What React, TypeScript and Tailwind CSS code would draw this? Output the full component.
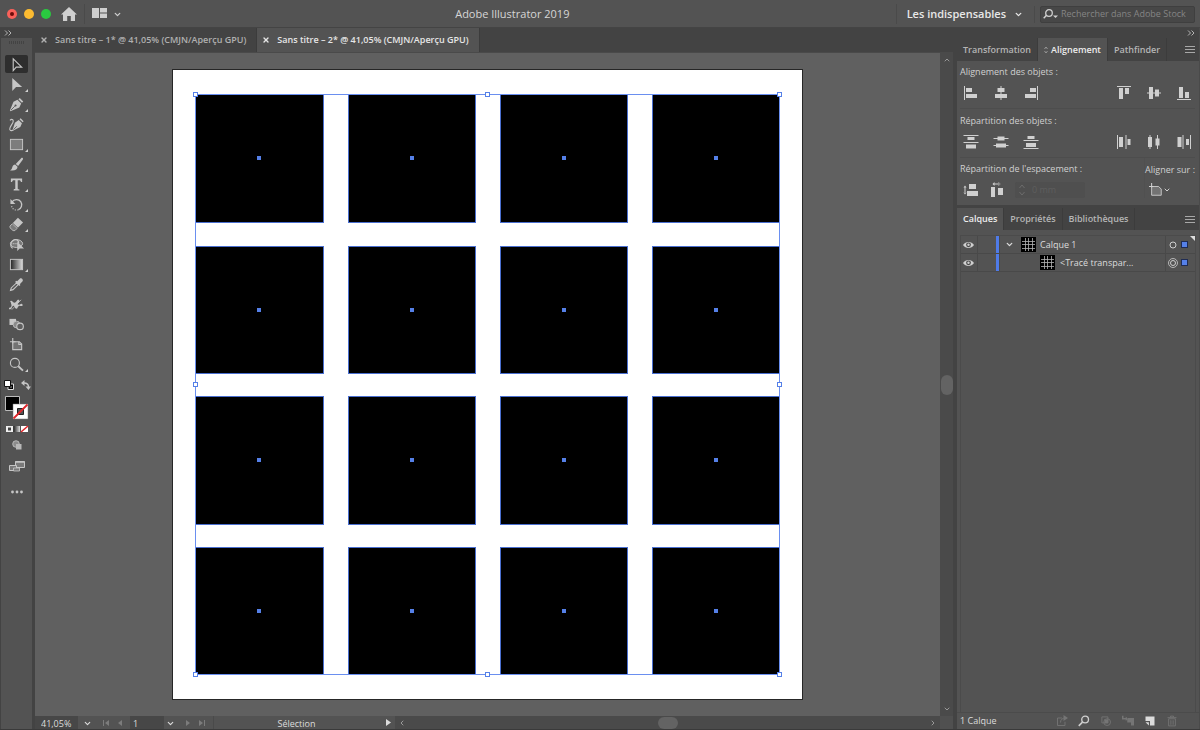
import { useState } from 'react';
import type { ReactNode } from 'react';
import { ChevronDown, ChevronUp, ChevronLeft, ChevronRight, X } from 'lucide-react';
import { clsx } from 'clsx';

type Tool = {
  id: string;
  label: string;
  more?: boolean;
  icon: ReactNode;
};

type IconProps = {
  children: ReactNode;
  className?: string;
};

function Icon({ children, className = 'size-4' }: IconProps) {
  return (
    <svg viewBox="0 0 16 16" fill="currentColor" aria-hidden="true" className={clsx('shrink-0', className)}>
      {children}
    </svg>
  );
}

const stroke = { fill: 'none', stroke: 'currentColor', strokeWidth: 1.2 };

/* =========================
   OUTILS
========================= */

const tools: Tool[] = [
  {
    id: 'selection',
    label: 'Sélection',
    icon: <path d="M4.5 2v12.500l3.200-3.700h5.800z" {...stroke} />,
  },
  {
    id: 'direct',
    label: 'Sélection directe',
    more: true,
    icon: <path d="M3.500 1v14l4-4.300h6.500z" />,
  },
  {
    id: 'pen',
    label: 'Plume',
    more: true,
    icon: (
      <>
        <path d="M9 3l4 4-2 4.200-9.500 3.900-.6-.6L4.800 5z" />
        <path d="M10 2.300l1.500-1.300 3.700 3.700-1.400 1.500z" />
        <path d="M2 14l4.200-4.200" stroke="#535353" strokeWidth="0.9" />
        <circle cx="7" cy="9" r="1.1" fill="#535353" />
      </>
    ),
  },
  {
    id: 'curve',
    label: 'Courbure',
    icon: (
      <>
        <path d="M10.3 3.200l3.500 3.500-1.700 4-7.600 3.800-.6-.6L6.300 6z" />
        <path d="M11.2 2.400l1.200-1.100 3.200 3.200-1.100 1.200z" />
        <path d="M4.8 13.4l3.6-3.6" stroke="#535353" strokeWidth="0.9" />
        <path d="M1 3.500c2.300-2.300 4.300-.2 3 2.700C2.600 9 0 11.500 1 13.500c.8 1.500 2.500 1 3.500.300" {...stroke} />
      </>
    ),
  },
  {
    id: 'rect',
    label: 'Rectangle',
    more: true,
    icon: <rect x="1.500" y="2.500" width="13" height="11" fill="#7d7d7d" stroke="currentColor" />,
  },
  {
    id: 'brush',
    label: 'Pinceau',
    more: true,
    icon: (
      <>
        <path d="M14.600 1c.6.500.500 1.200 0 1.900L9.700 9.600 7.200 7.400 13 1.200c.500-.5 1.100-.6 1.600-.2z" />
        <path d="M6.500 8l2.600 2.300c.1 2.900-3.100 4.900-8.100 3.900 2-.8 2.100-1.900 2.600-3.500.400-1.400 1.500-2.500 2.900-2.700z" />
      </>
    ),
  },
  {
    id: 'type',
    label: 'Texte',
    more: true,
    icon: <path d="M2 1.500h12v3.900h-1.300c-.2-1.500-.6-2-2-2H9.300v8.500c0 1 .3 1.200 1.800 1.300v1.100H4.900v-1.100c1.500-.1 1.800-.3 1.800-1.300V3.400H5.300c-1.400 0-1.800.5-2 2H2z" />,
  },
  {
    id: 'rotate',
    label: 'Rotation',
    more: true,
    icon: (
      <>
        <path d="M3 5.500C5.500 2 10.500 2 12.500 5c2.300 3.300.500 7.500-2.500 8.500" {...stroke} strokeWidth="1.400" />
        <path d="M10 13.500c-3.500 1.500-7.500-1-7.200-5" {...stroke} strokeDasharray="1.200 1.500" />
        <path d="M1.500 2v5.500h5.300z" />
      </>
    ),
  },
  {
    id: 'eraser',
    label: 'Gomme',
    more: true,
    icon: (
      <>
        <path d="M9.500.8l5.500 5-5.500 5.600-5.400-5z" />
        <path d="M3.500 7.200l5.200 4.900-2.400 2.400H4.300L1 11.400V9.700z" fill="#7a7a7a" stroke="currentColor" strokeWidth="0.900" />
      </>
    ),
  },
  {
    id: 'builder',
    label: 'Concepteur de forme',
    icon: (
      <>
        <ellipse cx="8" cy="7" rx="6.500" ry="4.200" fill="#777" stroke="currentColor" />
        <path d="M4 12c-3-1.500-3-6.500 1.500-9 3-1.200 5 1 4.800 4" {...stroke} />
        <path d="M4 7h5" {...stroke} strokeDasharray="1 1" />
        <path d="M8.800 5v10l2.600-2.800h4.600z" />
      </>
    ),
  },
  {
    id: 'gradient',
    label: 'Dégradé',
    more: true,
    icon: (
      <>
        <defs>
          <linearGradient id="tool-gradient">
            <stop offset="0" stopColor="#222" />
            <stop offset="1" stopColor="#ddd" />
          </linearGradient>
        </defs>
        <rect x="1.500" y="2.500" width="13" height="11" fill="url(#tool-gradient)" stroke="currentColor" />
      </>
    ),
  },
  {
    id: 'eyedropper',
    label: 'Pipette',
    icon: (
      <>
        <path d="M8.700 4.500l3-3c1.300-1.100 4 1.100 2.800 2.900l-3 3.200.7.800-1.200 1.200-4.500-4.400 1.200-1.200z" />
        <path d="M8 6.300l1.900 1.800-5.600 5.400-2.700.9.800-2.700z" {...stroke} />
      </>
    ),
  },
  {
    id: 'puppet',
    label: 'Marionnette',
    icon: (
      <>
        <path d="M1 4.500c2-2 3 1.500 5 1.500s2-3 4-3 1 3-.5 4 1.500 2 3 .5 3 1.500 1.500 2-2-.5-3.500 0-1 3.500-3 3-1-3.500-3-3-1 3-3 3.500-3-1-1-1.500 2.500-2 2-3.500S2 5 1 4.500z" />
        <path d="M3 13.500L8 8l5-5" {...stroke} strokeWidth="0.8" />
      </>
    ),
  },
  {
    id: 'blend',
    label: 'Dégradé de formes',
    icon: (
      <>
        <rect x="0.500" y="2" width="7" height="6.500" />
        <circle cx="8" cy="8" r="3.600" fill="#8a8a8a" stroke="currentColor" strokeWidth="0.8" />
        <circle cx="11.800" cy="10" r="3.500" fill="#5f5f5f" stroke="currentColor" strokeWidth="1.200" />
      </>
    ),
  },
  {
    id: 'artboard',
    label: 'Plan de travail',
    icon: (
      <>
        <path d="M4 5h7l2.500 2.500v6H4z" fill="#737373" stroke="currentColor" strokeWidth="1.200" />
        <path d="M4 1v6M1 5h6" {...stroke} />
        <path d="M10.500 5v3h3" {...stroke} />
      </>
    ),
  },
  {
    id: 'zoom',
    label: 'Zoom',
    more: true,
    icon: (
      <>
        <circle cx="6.300" cy="6.300" r="4.800" {...stroke} />
        <path d="M9.900 9.900l5 4.700" {...stroke} strokeWidth="2" />
      </>
    ),
  },
];

/* =========================
   ALIGNEMENT
========================= */

type Action = { label: string; icon: ReactNode };

const alignH: Action[] = [
  { label: 'Alignement horizontal à gauche', icon: <path d="M1 1h1v14H1zM3 3h6v4H3zM3 9h11v4H3z" /> },
  { label: 'Alignement horizontal au centre', icon: <path d="M7.500 1h1v14h-1zM4.500 3h7v4h-7zM2 9h12v4H2z" /> },
  { label: 'Alignement horizontal à droite', icon: <path d="M14 1h1v14h-1zM7 3h6v4H7zM2 9h11v4H2z" /> },
];

const alignV: Action[] = [
  { label: 'Alignement vertical en haut', icon: <path d="M1 1h14v1H1zM3 3h4v11H3zM9 3h4v6H9z" /> },
  { label: 'Alignement vertical au centre', icon: <path d="M1 7.500h14v1H1zM3 2h4v12H3zM9 4.500h4v7H9z" /> },
  { label: 'Alignement vertical en bas', icon: <path d="M1 14h14v1H1zM3 2h4v11H3zM9 7h4v6H9z" /> },
];

const spreadV: Action[] = [
  { label: 'Distribution verticale en haut', icon: <path d="M.5 1h15v1H.5zM4.500 3h7v3h-7zM.5 8h15v1H.5zM3 10.500h10v4H3z" /> },
  { label: 'Distribution verticale au centre', icon: <path d="M.5 4h15v1H.5zM4.500 2.500h7v4h-7zM.5 11h15v1H.5zM3 9.500h10v4H3z" /> },
  { label: 'Distribution verticale en bas', icon: <path d="M.5 6h15v1H.5zM4.500 2h7v3h-7zM.5 14h15v1H.5zM3 9h10v4H3z" /> },
];

const spreadH: Action[] = [
  { label: 'Distribution horizontale à gauche', icon: <path d="M1 1h1v14H1zM3 3h4v10H3zM9.500 1h1v14h-1zM11.500 5h3v6h-3z" /> },
  { label: 'Distribution horizontale au centre', icon: <path d="M3.500 1h1v14h-1zM2 3h4v10H2zM11 1h1v14h-1zM9.500 4.500h4v7h-4z" /> },
  { label: 'Distribution horizontale à droite', icon: <path d="M6.500 1h1v14h-1zM1.500 3h4v10h-4zM14 1h1v14h-1zM10 5h3v6h-3z" /> },
];

function Actions({ items }: { items: Action[] }) {
  return (
    <div className="flex gap-[14px]">
      {items.map((a) => (
        <button key={a.label} aria-label={a.label}>
          <Icon>{a.icon}</Icon>
        </button>
      ))}
    </div>
  );
}

function MenuButton() {
  return (
    <button aria-label="Menu du panneau" className="ml-auto pr-1 text-[#a8a8a8]">
      <svg viewBox="0 0 10 7" className="h-[7px] w-[10px]" fill="currentColor">
        <path d="M0 0h10v1H0zM0 3h10v1H0zM0 6h10v1H0z" />
      </svg>
    </button>
  );
}

function DoubleChevron() {
  return (
    <svg viewBox="0 0 8 6" className="h-[6px] w-2" fill="none" stroke="#b5b5b5">
      <path d="M1 .5L3.500 3 1 5.500M4.500.5L7 3 4.500 5.500" />
    </svg>
  );
}

/* =========================
   EN-TÊTE
========================= */

function Header() {
  return (
    <header className="flex h-7 items-center border-b border-[#444] bg-[#535353] pt-px">
      <div className="flex w-[129px] items-center">
        <div className="flex gap-[7px] pl-[7px]">
          <button aria-label="Fermer" className="flex size-[10px] items-center justify-center rounded-full bg-[#f9615a]">
            <span className="size-1 rounded-full bg-[#6d0c0a]" />
          </button>
          <button aria-label="Réduire" className="size-[10px] rounded-full bg-[#fcbb31]" />
          <button aria-label="Agrandir" className="size-[10px] rounded-full bg-[#2ac940]" />
        </div>
        <button aria-label="Accueil" className="ml-[10px] text-[#cfcfcf]">
          <svg viewBox="0 0 16 14" className="h-[14px] w-4" fill="currentColor">
            <path d="M8 0l8 7.500h-2V14H9.800V9H6.200v5H2V7.500H0z" />
          </svg>
        </button>
        <button aria-label="Réorganiser les documents" className="ml-[7px] flex items-center gap-[6px] border-l border-[#4a4a4a] py-1 pl-[7px] text-[#cfcfcf]">
          <svg viewBox="0 0 15 10" className="mb-[2px] h-[10px] w-[15px]" fill="currentColor">
            <path d="M0 0h7v10H0zM8 0h7v4.500H8zM8 5.500h7V10H8z" />
          </svg>
          <ChevronDown size={9} strokeWidth={3.500} />
        </button>
      </div>

      <h1 className="flex-1 text-center text-[11px] text-[#d6d6d6]">Adobe Illustrator 2019</h1>

      <div className="flex items-center">
        <button className="flex items-center gap-2 border-l border-[#4a4a4a] py-[2px] pr-[11px] pl-[10px] text-[11px] leading-4 font-semibold text-[#e8e8e8]">
          Les indispensables
          <ChevronDown size={9} strokeWidth={3.500} />
        </button>
        <div className="mr-[5px] border-l border-[#4a4a4a] pl-[5px]">
          <label className="flex h-[17px] w-[155px] items-center gap-[3px] rounded-xs border border-[#3f3f3f] bg-[#474747] pl-[2px]">
            <svg viewBox="0 0 15 10" className="h-[10px] w-[15px] shrink-0" fill="none" stroke="#d0d0d0">
              <circle cx="6" cy="4" r="3.300" strokeWidth="1.300" />
              <path d="M3.500 6.300L.7 9.200" strokeWidth="1.500" />
              <path d="M10 6.500h5L12.500 9z" fill="#d0d0d0" stroke="none" />
            </svg>
            <input
              type="text"
              aria-label="Rechercher dans Adobe Stock"
              placeholder="Rechercher dans Adobe Stock"
              className="w-full min-w-0 text-[9px] outline-none placeholder:text-[#858585]"
            />
          </label>
        </div>
      </div>
    </header>
  );
}

/* =========================
   BARRE D'OUTILS
========================= */

function Toolbar() {
  const [active, setActive] = useState('selection');

  return (
    <aside className="flex w-[35px] shrink-0 flex-col border-r-[3px] border-l border-r-[#434343] border-l-[#434343] bg-[#535353] text-[#c6c6c6]">
      <button aria-label="Réduire la barre d'outils" className="flex h-[10px] shrink-0 items-center bg-[#434343] pl-[3px]">
        <DoubleChevron />
      </button>
      <div className="mx-auto mt-[3px] h-[3px] w-4 bg-[repeating-linear-gradient(90deg,#434343_0_1px,#535353_1px_2px)]" />

      <div className="mt-[10px] flex flex-col">
        {tools.map((t) => (
          <button
            key={t.id}
            aria-label={t.label}
            onClick={() => setActive(t.id)}
            className="relative flex h-5 items-center justify-center"
          >
            <span
              className={clsx(
                'flex h-[18px] w-[23px] items-center justify-center rounded-xs',
                active === t.id && 'bg-[#2e2e2e]'
              )}
            >
              <Icon className="size-[15px]">{t.icon}</Icon>
            </span>
            {t.more && (
              <svg viewBox="0 0 3 3" className="absolute right-[4px] bottom-[2px] size-[3px]" fill="#d0d0d0">
                <path d="M3 0v3H0z" />
              </svg>
            )}
          </button>
        ))}
      </div>

      {/* FOND ET CONTOUR */}
      <div className="mt-[6px] flex justify-between pr-px pl-[3px]">
        <button aria-label="Fond et contour par défaut">
          <svg viewBox="0 0 10 10" className="size-[10px]">
            <path d="M4 4h5.500v5.500H4z" fill="#000" stroke="#ddd" />
            <path d="M6 6h2v2H6z" fill="#535353" />
            <path d="M.5.5h6v6h-6z" fill="#fff" stroke="#111" />
          </svg>
        </button>
        <button aria-label="Permuter le fond et le contour">
          <svg viewBox="0 0 10 10" className="size-[10px]" fill="currentColor">
            <path d="M3 3c3 0 4.500 1.200 4.500 4" fill="none" stroke="currentColor" strokeWidth="1.500" />
            <path d="M0 3l3.500-3v6zM4.500 6.500h5.500L7.500 10z" />
          </svg>
        </button>
      </div>
      <button aria-label="Fond et contour" className="mt-[6px] flex pl-[4px]">
        <svg viewBox="0 0 24 24" className="size-6">
          <path d="M.5.5h14v14H.5z" fill="#000" stroke="#bbb" />
          <path d="M8 8h15v15H8z" fill="#fff" stroke="#777" strokeWidth="0.5" />
          <path d="M12.500 12.500h6v6h-6z" fill="#535353" stroke="#222" />
          <path d="M8.500 22.500l14-14" stroke="#e0262b" strokeWidth="1.800" />
        </svg>
      </button>
      <div className="mt-[5px] flex pl-[5px]">
        <button aria-label="Couleur, dégradé, sans">
          <svg viewBox="0 0 23 8" className="h-2 w-[23px]">
            <path d="M0 1h7v6H0z" fill="#eee" />
            <path d="M2 2.500h3v3H2z" fill="#444" />
            <path d="M7.500 1h6.500v6H7.500z" fill="url(#tool-gradient)" />
            <path d="M15 1h7v6h-7z" fill="#fff" />
            <path d="M15 7l7-6" stroke="#e0262b" strokeWidth="1.600" />
          </svg>
        </button>
      </div>

      <button aria-label="Mode de dessin" className="mx-auto mt-[7px]">
        <svg viewBox="0 0 10 10" className="size-[10px]">
          <circle cx="4" cy="4" r="3.300" fill="#8c8c8c" stroke="#c6c6c6" strokeWidth="0.800" />
          <path d="M4 4h5.500v5.500H4z" fill="#b8b8b8" />
        </svg>
      </button>
      <button aria-label="Modes d'écran" className="mx-auto mt-[10px]">
        <svg viewBox="0 0 16 12" className="h-3 w-4" fill="#7a7a7a" stroke="#c6c6c6">
          <path d="M6.500 1.500h9v6h-9z" />
          <path d="M6.500 2h9" strokeWidth="1.500" />
          <path d="M.5 5.500h7v5h-7z" />
          <path d="M4.500 8h6v3h-6z" strokeWidth="0.800" />
        </svg>
      </button>
      <button aria-label="Modifier la barre d'outils" className="mx-auto mt-[18px]">
        <svg viewBox="0 0 12 4" className="h-1 w-3" fill="currentColor">
          <circle cx="1.500" cy="2" r="1.400" />
          <circle cx="6" cy="2" r="1.400" />
          <circle cx="10.500" cy="2" r="1.400" />
        </svg>
      </button>
    </aside>
  );
}

/* =========================
   DOCUMENT
========================= */

// début et fin de chaque colonne / ligne
const cols = [[23, 151], [176, 303], [328, 455], [480, 607]];
const rows = [[25, 153], [177, 304], [327, 455], [478, 605]];
const handles = [
  [23, 25], [315, 25], [607, 25],
  [23, 315], [607, 315],
  [23, 605], [315, 605], [607, 605],
];

function Artboard() {
  return (
    <svg viewBox="0 0 631 631" className="size-[631px] shrink-0" role="img" aria-label="Plan de travail 1">
      <rect x="0.500" y="0.500" width="630" height="630" fill="#fff" stroke="#262626" />
      {rows.map(([y1, y2]) =>
        cols.map(([x1, x2]) => (
          <g key={`${x1}-${y1}`}>
            <rect x={x1 + 0.5} y={y1 + 0.5} width={x2 - x1} height={y2 - y1} fill="#000" stroke="#4a6fd0" />
            <rect x={Math.ceil((x1 + x2) / 2) - 2} y={Math.ceil((y1 + y2) / 2) - 2} width="4" height="4" fill="#5580e8" />
          </g>
        ))
      )}
      <rect x="23.500" y="25.500" width="584" height="580" fill="none" stroke="#6a8ff0" />
      {handles.map(([x, y]) => (
        <rect key={`${x}-${y}`} x={x - 1.5} y={y - 1.5} width="4" height="4" fill="#fff" stroke="#5580e8" />
      ))}
    </svg>
  );
}

const docs = ['Sans titre – 1* @ 41,05% (CMJN/Aperçu GPU)', 'Sans titre – 2* @ 41,05% (CMJN/Aperçu GPU)'];

function DocumentArea() {
  const [current, setCurrent] = useState(1);

  return (
    <main className="flex min-w-0 flex-1 flex-col">
      <div className="flex h-[25px] shrink-0 items-stretch border-b border-[#4a4a4a] bg-[#434343]" role="tablist">
        {docs.map((d, i) => (
          <div
            key={d}
            className={clsx(
              'flex items-center gap-[7px] border-r border-[#3c3c3c] pr-[10px] pl-[5px] text-[9px] font-semibold',
              i === current ? 'bg-[#535353] text-[#e6e6e6]' : 'text-[#b0b0b0]'
            )}
          >
            <button aria-label="Fermer le document">
              <X size={8} strokeWidth={4} />
            </button>
            <button role="tab" aria-selected={i === current} onClick={() => setCurrent(i)} className="whitespace-nowrap">
              {d}
            </button>
          </div>
        ))}
      </div>

      <div className="flex min-h-0 flex-1">
        <div className="flex min-w-0 flex-1 items-center justify-center overflow-hidden bg-[#606060]">
          <Artboard />
        </div>
        <div className="flex w-[13px] shrink-0 flex-col items-center justify-between bg-[#4a4a4a] py-[3px] text-[#999]">
          <button aria-label="Défiler vers le haut">
            <ChevronUp size={8} strokeWidth={3} />
          </button>
          <div className="h-5 w-3 rounded-full bg-[#636363]" />
          <button aria-label="Défiler vers le bas">
            <ChevronDown size={8} strokeWidth={3} />
          </button>
        </div>
      </div>

      {/* BARRE D'ÉTAT */}
      <footer className="flex h-[13px] shrink-0 items-center bg-[#535353] text-[9px] leading-3 text-[#dcdcdc]">
        <div className="flex h-full items-center">
          <input aria-label="Zoom" defaultValue="41,05%" className="h-full w-[43px] bg-[#474747] pt-[2px] pl-[6px]" />
          <button aria-label="Choisir le zoom" className="flex w-[18px] justify-center pt-px">
            <ChevronDown size={9} strokeWidth={3} />
          </button>
        </div>
        <div className="flex w-[32px] items-center justify-center gap-2 text-[#7c7c7c]">
          <button aria-label="Premier">
            <svg viewBox="0 0 7 6" className="h-[6px] w-[7px]" fill="currentColor">
              <path d="M0 0h1v6H0zM6 0v6L2 3z" />
            </svg>
          </button>
          <button aria-label="Précédent">
            <svg viewBox="0 0 4 6" className="h-[6px] w-1" fill="currentColor">
              <path d="M4 0v6L0 3z" />
            </svg>
          </button>
        </div>
        <input aria-label="Plan de travail" defaultValue="1" className="ml-[2px] h-full w-[34px] bg-[#474747] pt-[2px] pl-[3px]" />
        <button aria-label="Choisir le plan de travail" className="flex w-[13px] justify-center pt-px">
          <ChevronDown size={9} strokeWidth={3} />
        </button>
        <div className="flex w-[36px] items-center justify-center gap-2 text-[#7c7c7c]">
          <button aria-label="Suivant">
            <svg viewBox="0 0 4 6" className="h-[6px] w-1" fill="currentColor">
              <path d="M0 0v6l4-3z" />
            </svg>
          </button>
          <button aria-label="Dernier">
            <svg viewBox="0 0 7 6" className="h-[6px] w-[7px]" fill="currentColor">
              <path d="M1 0v6l4-3zM6 0h1v6H6z" />
            </svg>
          </button>
        </div>
        <span className="w-[166px] border-l border-[#4a4a4a] pt-[2px] text-center">Sélection</span>
        <button aria-label="Afficher" className="ml-[7px]">
          <svg viewBox="0 0 5 7" className="h-[7px] w-[5px]" fill="currentColor">
            <path d="M0 0v7l5-3.500z" />
          </svg>
        </button>
        <div className="ml-1 flex h-full flex-1 items-center justify-between bg-[#4a4a4a] pr-[3px] pl-[3px] text-[#999]">
          <button aria-label="Défiler vers la gauche">
            <ChevronLeft size={8} strokeWidth={3} />
          </button>
          <div className="h-3 w-5 rounded-full bg-[#636363]" />
          <button aria-label="Défiler vers la droite">
            <ChevronRight size={8} strokeWidth={3} />
          </button>
        </div>
        <div className="h-full w-[13px] bg-[#505050]" />
      </footer>
    </main>
  );
}

/* =========================
   PANNEAUX
========================= */

function Thumb() {
  return (
    <svg viewBox="0 0 15 15" className="size-[15px] shrink-0">
      <path d="M0 0h15v15H0z" fill="#000" />
      <path d="M1 4.500h13M1 7.500h13M1 11.500h13M4.500 1v13M7.500 1v13M11.500 1v13" stroke="#b5b5b5" strokeWidth="0.800" />
    </svg>
  );
}

function PanelTab({ active, children }: { active?: boolean; children: ReactNode }) {
  return (
    <button
      role="tab"
      aria-selected={!!active}
      className={clsx(
        'flex items-center gap-[3px] border-r border-[#3c3c3c] px-[6px] text-[9px] font-semibold whitespace-nowrap',
        active ? 'bg-[#535353] text-[#ececec]' : 'text-[#b5b5b5]'
      )}
    >
      {children}
    </button>
  );
}

function AlignPanel() {
  return (
    <section className="flex shrink-0 flex-col bg-[#535353]">
      <div role="tablist" className="flex h-[23px] bg-[#434343]">
        <PanelTab>Transformation</PanelTab>
        <PanelTab active>
          <svg viewBox="0 0 4 8" className="h-2 w-1" fill="none" stroke="#aaa">
            <path d="M.5 3L2 1l1.500 2M.5 5L2 7l1.500-2" strokeWidth="0.800" />
          </svg>
          Alignement
        </PanelTab>
        <PanelTab>Pathfinder</PanelTab>
        <MenuButton />
      </div>

      <div className="pr-[4px] pl-[3px] text-[9px] leading-3 text-[#d0d0d0]">
        <h2 className="pt-[5px]">Alignement des objets :</h2>
        <div className="mt-[7px] flex justify-between pr-[3px] pb-[7px] pl-[3px]">
          <Actions items={alignH} />
          <Actions items={alignV} />
        </div>

        <h2 className="border-t border-[#4d4d4d] pt-[6px]">Répartition des objets :</h2>
        <div className="mt-[7px] flex justify-between pr-[3px] pb-[7px] pl-[3px]">
          <Actions items={spreadV} />
          <Actions items={spreadH} />
        </div>

        <div className="flex justify-between border-t border-[#4d4d4d] pb-[7px]">
          <div className="pt-[5px]">
            <h2>Répartition de l'espacement :</h2>
            <div className="mt-[7px] flex items-center gap-[10px] pl-[3px]">
              <button aria-label="Distribution verticale de l'espace">
                <Icon>
                  <path d="M.5 5.500l1.500-2 1.500 2zM.5 10.500l1.500 2 1.500-2zM1.500 5h1v6h-1zM6 2h7v5H6zM4 9h11v5H4z" />
                </Icon>
              </button>
              <button aria-label="Distribution horizontale de l'espace">
                <Icon>
                  <path d="M2 5h4v10H2zM9 6h5v7H9zM4 1.500h7v1H4zM5.500 0v4l-2-2zM9.500 0v4l2-2z" />
                </Icon>
              </button>
              <label className="flex h-4 w-[70px] items-center rounded-xs bg-[#4f4f4f] pl-1 text-[#5e5e5e]">
                <svg viewBox="0 0 6 12" className="h-3 w-[6px] shrink-0" fill="none" stroke="#6c6c6c">
                  <path d="M.5 4L3 1l2.500 3M.5 8L3 11l2.500-3" />
                </svg>
                <input disabled aria-label="Espacement" defaultValue="0 mm" className="w-full min-w-0 pl-[7px]" />
              </label>
            </div>
          </div>
          <div className="flex flex-col items-center border-l border-[#505050] pt-[6px]">
            <span>Aligner sur :</span>
            <button aria-label="Aligner sur" className="mt-[7px] mr-5 flex items-center">
              <Icon className="size-[14px]">
                <path d="M3 4h8l3 3v7H3z" fill="#737373" stroke="currentColor" />
                <path d="M3 0v5M0 4h5" {...stroke} />
              </Icon>
              <ChevronDown size={8} strokeWidth={3} />
            </button>
          </div>
        </div>
      </div>
    </section>
  );
}

function LayerRow({ name, nested }: { name: string; nested?: boolean }) {
  return (
    <li className="flex h-[18px] items-stretch border-b border-[#494949] text-[9px] text-[#dcdcdc]">
      <button aria-label={`Afficher ou masquer ${name}`} className="flex w-[17px] items-center border-r border-[#494949] pl-[2px] text-[#cfcfcf]">
        <svg viewBox="0 0 11 8" className="h-2 w-[11px]">
          <path d="M0 4C2.500 0 8.500 0 11 4 8.500 8 2.500 8 0 4z" fill="currentColor" />
          <circle cx="5.500" cy="3.800" r="2.400" fill="#474747" />
          <circle cx="5.500" cy="3.800" r="1.200" fill="currentColor" />
        </svg>
      </button>
      <div className="flex w-[22px] justify-end border-r border-[#494949]">
        <span className="w-[3px] bg-[#4f7be8]" />
      </div>
      <div className={clsx('flex flex-1 items-center', nested ? 'pl-[40px]' : 'pl-[5px]')}>
        {!nested && (
          <button aria-label="Développer le calque" className="mr-[7px]">
            <ChevronDown size={9} strokeWidth={3.500} />
          </button>
        )}
        <Thumb />
        <span className={nested ? 'pl-[5px]' : 'pl-1'}>{name}</span>
      </div>
      <button aria-label={`Cibler ${name}`} className="flex w-[14px] items-center justify-center border-l border-[#494949]">
        <svg viewBox="0 0 10 10" className="size-[10px]" fill="none" stroke="#cfcfcf">
          <circle cx="5" cy="5" r={nested ? 2.5 : 3} />
          {nested && <circle cx="5" cy="5" r="4.500" strokeWidth="0.800" />}
        </svg>
      </button>
      <div className="relative flex w-4 items-center pl-[2px]">
        <span className="size-[7px] border border-[#1f2c54] bg-[#5580e8]" />
        {!nested && (
          <svg viewBox="0 0 5 5" className="absolute top-0 right-0 size-[5px]" fill="#ddd">
            <path d="M0 0h5v5z" />
          </svg>
        )}
      </div>
    </li>
  );
}

function LayersPanel() {
  return (
    <section className="mt-[3px] flex min-h-0 flex-1 flex-col bg-[#535353]">
      <div role="tablist" className="flex h-[22px] shrink-0 bg-[#434343]">
        <PanelTab active>Calques</PanelTab>
        <PanelTab>Propriétés</PanelTab>
        <PanelTab>Bibliothèques</PanelTab>
        <MenuButton />
      </div>

      <ul className="mx-[3px] mt-[5px] flex-1 border-x border-t border-[#4b4b4b]">
        <LayerRow name="Calque 1" />
        <LayerRow name="<Tracé transpar..." nested />
      </ul>

      <footer className="flex h-[17px] shrink-0 items-center justify-between border-t border-[#4b4b4b] pr-[21px] pl-[3px] text-[9px] text-[#dcdcdc]">
        <span>1 Calque</span>
        <div className="flex gap-[10px] text-[#757575]">
          <button aria-label="Exporter" disabled>
            <Icon className="size-3">
              <path d="M8 4H2v10h10V9M6 10c0-4 3-6 6-6" {...stroke} />
              <path d="M10 0l6 4-6 4z" />
            </Icon>
          </button>
          <button aria-label="Localiser l'objet" className="text-[#cfcfcf]">
            <Icon className="size-3">
              <circle cx="9.500" cy="6" r="4.500" {...stroke} strokeWidth="1.800" />
              <path d="M6 9.500L1 14.500" {...stroke} strokeWidth="2.200" />
            </Icon>
          </button>
          <button aria-label="Créer un masque" disabled>
            <Icon className="size-3">
              <path d="M2.500 2.500h8v8h-8z" {...stroke} />
              <circle cx="9.500" cy="9.500" r="4.500" {...stroke} />
              <path d="M6 6h5v5H6z" />
            </Icon>
          </button>
          <button aria-label="Nouveau sous-calque" disabled>
            <Icon className="size-3">
              <path d="M7 4h9v10h-4v-4H7zM0 1v5h5v2l3-3-3-3v2H2V1z" />
            </Icon>
          </button>
          <button aria-label="Nouveau calque" className="text-[#dcdcdc]">
            <Icon className="size-3">
              <path d="M2 2h12v12H8V8H2zM2 9.500L6.500 14V9.500z" />
            </Icon>
          </button>
          <button aria-label="Supprimer" disabled>
            <Icon className="size-3">
              <path d="M3.500 5h9v9.500h-9zM2 3.500h12M6 3V1.500h4V3M6.500 7v6M9.500 7v6" {...stroke} />
            </Icon>
          </button>
        </div>
      </footer>
    </section>
  );
}

export default function App() {
  return (
    <div className="flex h-screen flex-col overflow-hidden border-b border-[#3a3a3a] bg-[#434343] font-['Open_Sans','Noto_Sans',sans-serif]">
      <Header />

      <div className="flex min-h-0 flex-1">
        <Toolbar />
        <DocumentArea />

        <aside className="flex w-[247px] shrink-0 flex-col border-r border-l-[4px] border-r-[#4a4a4a] border-l-[#434343]">
          <button aria-label="Réduire les panneaux" className="flex h-[10px] shrink-0 items-center justify-end pr-1">
            <DoubleChevron />
          </button>
          <AlignPanel />
          <LayersPanel />
        </aside>
      </div>
    </div>
  );
}
